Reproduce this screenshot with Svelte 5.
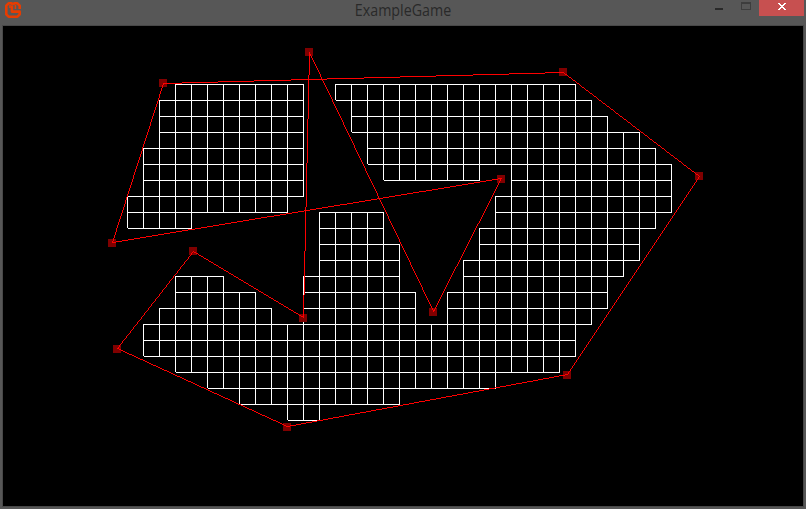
<script>
  const CELL = 16;
  const ORIGIN = { x: 124, y: 58 };

  // Filled spans per grid row, as [left, right] in canvas pixels.
  const rows = [
    [[172, 300], [332, 572]],
    [[156, 300], [348, 588]],
    [[156, 300], [348, 604]],
    [[156, 300], [364, 636]],
    [[140, 300], [364, 652]],
    [[140, 300], [380, 476], [508, 668]],
    [[140, 300], [508, 668]],
    [[124, 284], [492, 668]],
    [[124, 188], [316, 380], [492, 652]],
    [[316, 380], [476, 636]],
    [[316, 396], [476, 636]],
    [[316, 396], [460, 620]],
    [[172, 220], [300, 396], [460, 604]],
    [[172, 252], [300, 412], [444, 604]],
    [[156, 268], [300, 412], [444, 588]],
    [[140, 572]],
    [[140, 572]],
    [[172, 556]],
    [[204, 492]],
    [[236, 396]],
    [[284, 316]]
  ];

  // Handle centre x, handle centre y, and the pixel row where the edges meet.
  const vertices = [
    [160, 57, 57], [560, 46, 46], [696, 150, 150], [564, 349, 348],
    [284, 401, 400], [114, 323, 322], [190, 225, 225], [300, 292, 291],
    [306, 26, 26], [430, 286, 285], [498, 153, 152], [109, 217, 216]
  ];

  function cellPath(x, y) {
    return `M${x} ${y}h17v1h-17zM${x} ${y}h1v16h-1zM${x + 1} ${y + CELL}h16v1h-16zM${x + CELL} ${y}h1v17h-1z`;
  }

  let grid = '';
  rows.forEach((spans, r) => {
    for (const [left, right] of spans) {
      for (let x = left; x < right; x += CELL) grid += cellPath(x, ORIGIN.y + r * CELL);
    }
  });

  // Aliased one-pixel edge between two vertices.
  function edge([x0, , y0], [x1, , y1]) {
    const n = Math.max(Math.abs(x1 - x0), Math.abs(y1 - y0));
    let d = '';
    for (let i = 0; i <= n; i++) {
      const x = Math.round(x0 + ((x1 - x0) * i) / n);
      const y = Math.round(y0 + ((y1 - y0) * i) / n);
      d += `M${x} ${y}h1v1h-1z`;
    }
    return d;
  }

  const outline = vertices.map((v, i) => edge(v, vertices[(i + 1) % vertices.length])).join('');
</script>

<div class="window">
  <header>
    <svg class="logo" width="16" height="16" viewBox="0 0 16 16">
      <g fill="none" stroke="#e73c00" stroke-width="2.6" stroke-linejoin="round">
        <path d="M8 2.6L6.6 1.3H3.6L1.3 3.6v8.8l2.3 2.3h8.8l2.3-2.3V9.6H6.9V3.4" />
        <path d="M8 2.6l1.4-1.3h3l2.3 2.3v3.3" />
        <path stroke-width="1.6" d="M10.4 3v4M5 3v3" />
      </g>
    </svg>
    <h1>ExampleGame</h1>
    <div class="controls">
      <span class="min"></span>
      <span class="max"></span>
      <span class="close">
        <svg width="8" height="7" viewBox="0 0 8 7" shape-rendering="crispEdges">
          <path fill="#fff" d="M0 0h2v1h-2zM6 0h2v1h-2zM1 1h2v1h-2zM5 1h2v1h-2zM2 2h4v1h-4zM3 3h2v1h-2zM2 4h4v1h-4zM1 5h2v1h-2zM5 5h2v1h-2zM0 6h2v1h-2zM6 6h2v1h-2z" />
        </svg>
      </span>
    </div>
  </header>
  <main>
    <svg width="800" height="480" viewBox="0 0 800 480" shape-rendering="crispEdges">
      <path d={grid} fill="#fff" />
      {#each vertices as [x, y]}
        <rect x={x - 4} y={y - 4} width="8" height="8" fill="#800000" />
      {/each}
      <path d={outline} fill="#f00" />
    </svg>
  </main>
</div>

<style>
  :global(body) { margin: 0; background: #575757; }
  .window {
    box-sizing: border-box;
    width: 806px;
    height: 509px;
    background: #575757;
    padding: 0 2px;
    overflow: hidden;
    font-family: "Open Sans", "Noto Sans", sans-serif;
  }
  header {
    height: 25px;
    display: grid;
    grid-template-columns: 120px 1fr 120px;
    align-items: start;
  }
  .logo { margin: 2px 0 0 3px; }
  h1 {
    margin: 0;
    text-align: center;
    font-size: 15.5px;
    line-height: 20px;
    font-weight: 400;
    color: #292929;
    transform: scaleX(0.92);
  }
  .controls { display: flex; justify-content: flex-end; }
  .min { width: 8px; height: 2px; margin: 8px 18px 0 0; background: #292929; }
  .max {
    box-sizing: border-box;
    width: 10px;
    height: 8px;
    margin: 2px 8px 0 0;
    border: 1px solid #3d3d3d;
    border-top-width: 2px;
  }
  .close {
    width: 45px;
    height: 16px;
    background: #c75050;
    display: flex;
    justify-content: center;
  }
  .close svg { margin-top: 3px; }
  main { border: 1px solid #484848; width: 800px; height: 480px; background: #000; }
  main svg { display: block; }
</style>
